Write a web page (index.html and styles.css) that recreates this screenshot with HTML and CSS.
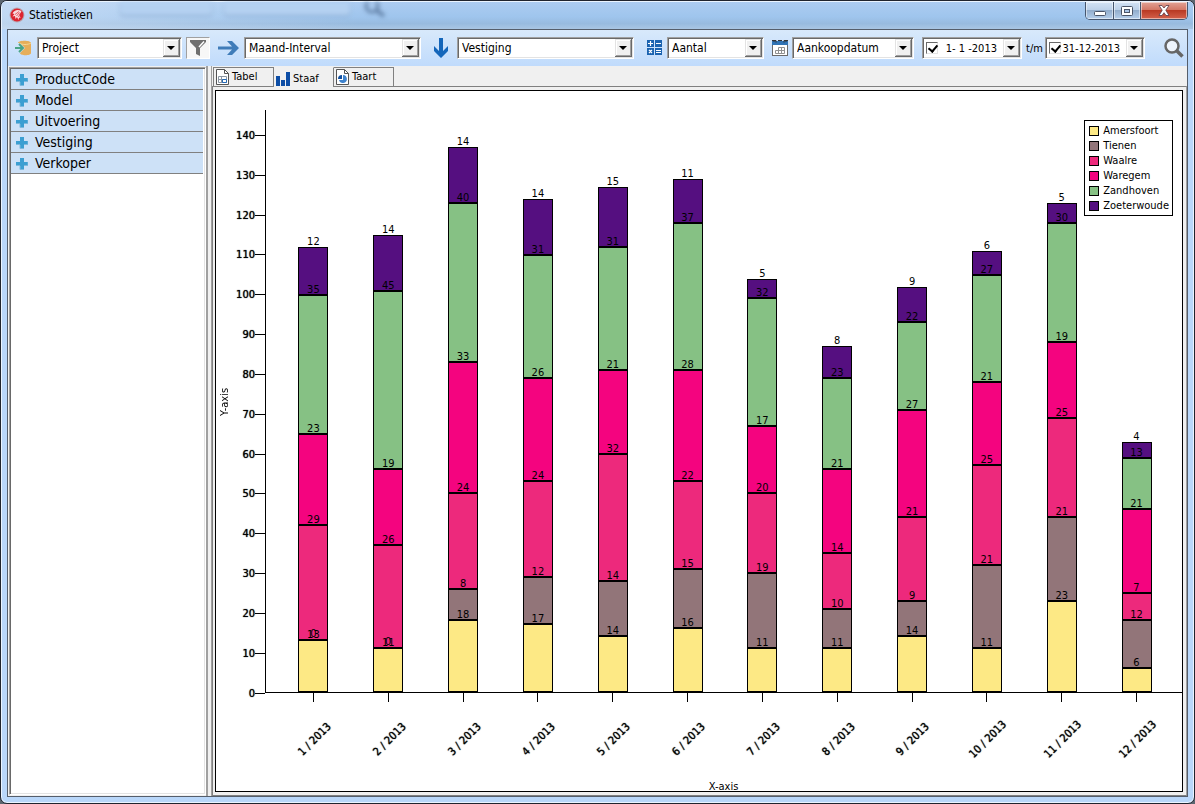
FILE: index.html
```html
<!DOCTYPE html>
<html lang="nl">
<head>
    <meta charset="UTF-8">
    <meta name="viewport" content="width=device-width, initial-scale=1.0">
    <title>Statistieken</title>
    <link rel="stylesheet" href="styles.css">
</head>
<body>
    <div class="window">
        <div class="titlebar">
            <div class="glass">
                <span class="ghost ghost-tab"></span>
                <span class="ghost ghost-tab wide"></span>
                <svg class="ghost-search" width="28" height="20" viewBox="0 0 28 20"><circle cx="10" cy="4" r="6" fill="none" stroke="#6483a9" stroke-width="3"/><path d="M14 8l8 6" stroke="#6483a9" stroke-width="4"/></svg>
            </div>
            <svg width="16" height="16" viewBox="0 0 16 16">
                <circle cx="8" cy="8" r="7.500" fill="#b9a9b4"/>
                <circle cx="8" cy="8" r="6.500" fill="#dc2430"/>
                <path d="M12.500 4C9 2 5 3 3.500 6.500l2 .5-2 2.500 2.500-.5.500 3 1.500-2 1.500 3 .5-2.500 1.500.5-1-3z" fill="#f9d9dc"/>
                <path d="M6 7.500l4-3M7.500 9l3-3.500M9.500 10l2-4" stroke="#dc2430" stroke-width=".7"/>
            </svg>
            <h1>Statistieken</h1>
            <div class="window-buttons">
                <button type="button" class="minimize" aria-label="Minimaliseren"><svg width="12" height="12" viewBox="0 0 12 12"><rect x=".5" y="6.500" width="11" height="4" rx="1" fill="#fff" stroke="#4b5467"/></svg></button>
                <button type="button" class="maximize" aria-label="Maximaliseren"><svg width="12" height="10" viewBox="0 0 12 10"><rect x=".5" y=".5" width="11" height="9" rx="1" fill="#fff" stroke="#4b5467"/><rect x="3.500" y="3.500" width="5" height="3" fill="#a9c4e6" stroke="#4b5467"/></svg></button>
                <button type="button" class="close" aria-label="Sluiten"><svg width="12" height="11" viewBox="0 0 12 11"><path d="M1 .5h3l2 2.500 2-2.500h3L7.800 5.200 11 10.500H8L6 7.700 4 10.500H1l3.200-5.300z" fill="#fff" stroke="#5a3a48" stroke-width=".8"/></svg></button>
            </div>
        </div>

        <div class="client">
            <div class="toolbar">
                <div class="group">
                    <svg width="18" height="18" viewBox="0 0 18 18">
                        <path d="M3 4c0-3 13-3 13 0v10c0 3-11 3-11 0l5-5-5-5z" fill="#e6ae5a"/>
                        <path d="M4 4c3 2 9 2 12 0" fill="none" stroke="#f7d795"/>
                        <path d="M0 9h7M4 5l4 4-4 4" fill="none" stroke="#4aa586" stroke-width="2"/>
                    </svg>
                    <div class="combo combo-project">
                        <select aria-label="Project"><option>Project</option></select>
                        <span class="drop"></span>
                    </div>
                    <button type="button" class="filter" aria-label="Filter"><svg width="16" height="16" viewBox="0 0 16 16"><path d="M0 0h16v2l-6 6v8l-4-2V8L0 2z" fill="#6f6f6f"/><path d="M14 1.500L9 7" fill="none" stroke="#fff" stroke-width="1.500"/></svg></button>
                </div>
                <div class="group">
                    <svg width="22" height="16" viewBox="0 0 22 16"><path d="M0 6.500h14L9 1h5l7 7-7 7H9l5-5.500H0z" fill="#3f7cb9"/></svg>
                    <div class="combo combo-wide">
                        <select aria-label="Rijen"><option>Maand-Interval</option></select>
                        <span class="drop"></span>
                    </div>
                </div>
                <div class="group">
                    <svg width="24" height="20" viewBox="0 0 24 20"><path d="M10 0h4v13l5-5v5l-7 7-7-7V8l5 5z" fill="#1466ba"/></svg>
                    <div class="combo combo-wide">
                        <select aria-label="Kolommen"><option>Vestiging</option></select>
                        <span class="drop"></span>
                    </div>
                </div>
                <div class="group">
                    <svg width="21" height="16" viewBox="0 0 21 16">
                        <path d="M5 0h7v7H5zM13 0h7v7h-7zM5 8h7v7H5zM13 8h7v7h-7z" fill="#1b63b0"/>
                        <path d="M6 3.500h5M8.500 1v5M14 3.500h5M14 10.500h5M14 12.500h5M7 10l3 3M10 10l-3 3" stroke="#fff" stroke-width="1.200"/>
                    </svg>
                    <div class="combo combo-measure">
                        <select aria-label="Waarde"><option>Aantal</option></select>
                        <span class="drop"></span>
                    </div>
                </div>
                <div class="group">
                    <svg width="16" height="16" viewBox="0 0 16 16">
                        <rect x=".5" y="1.500" width="15" height="14" fill="#fff" stroke="#6b6b6b"/>
                        <path d="M0 1h16v4H0z" fill="#2f73b5"/>
                        <path d="M0 .5h4v2M6 .5h4M12 2.500v-2h4M2 0v2M14 0v2" fill="none" stroke="#333"/>
                        <path d="M3.500 10.500v3h9v-6h-6v6M3.500 10.500h9M9.500 7.500v6" fill="none" stroke="#909090"/>
                    </svg>
                    <div class="combo combo-date-field">
                        <select aria-label="Datumveld"><option>Aankoopdatum</option></select>
                        <span class="drop"></span>
                    </div>
                </div>
                <div class="group">
                    <div class="combo combo-date">
                        <input type="checkbox" aria-label="Begindatum actief" checked>
                        <input type="text" aria-label="Begindatum" value="1- 1 -2013">
                        <button type="button" class="drop" aria-label="Kies begindatum"></button>
                    </div>
                    <span class="until">t/m</span>
                    <div class="combo combo-date">
                        <input type="checkbox" aria-label="Einddatum actief" checked>
                        <input type="text" aria-label="Einddatum" value="31-12-2013">
                        <button type="button" class="drop" aria-label="Kies einddatum"></button>
                    </div>
                </div>
                <button type="button" class="search" aria-label="Zoeken"><svg width="20" height="20" viewBox="0 0 20 20"><circle cx="8" cy="8" r="6.500" fill="#eef4fc" stroke="#666" stroke-width="2.500"/><path d="M12.500 12.500l6 6" stroke="#666" stroke-width="3.500"/></svg></button>
            </div>

            <div class="main">
                <div class="sidebar" id="sidebar"></div>
                <div class="splitter"></div>
                <div class="content">
                    <div class="tabs" role="tablist">
                        <button type="button" role="tab" class="tab">
                            <svg width="13" height="16" viewBox="0 0 13 16"><path d="M.5.5h8l4 4v11H.5z" fill="#fff" stroke="#555"/><path d="M8.500.5v4h4" fill="none" stroke="#555"/><path d="M2.500 7.500h8v6h-8zM2.500 10.500h8M5.500 7.500v6" fill="none" stroke="#8b96a3"/><path d="M6.500 10.500h4v3h-4z" fill="#fff" stroke="#2569b5"/></svg>
                            Tabel
                        </button>
                        <button type="button" role="tab" class="tab active" aria-selected="true">
                            <svg width="14" height="14" viewBox="0 0 14 14"><path d="M0 4h4v10H0zM5 8h4v6H5zM10 0h4v14h-4z" fill="#0d4da5"/></svg>
                            Staaf
                        </button>
                        <button type="button" role="tab" class="tab">
                            <svg width="13" height="16" viewBox="0 0 13 16"><path d="M.5.5h8l4 4v11H.5z" fill="#fff" stroke="#555"/><path d="M8.500.5v4h4" fill="none" stroke="#555"/><path d="M7 6a4 4 0 1 1-4 5h4z" fill="#3f83cd"/><path d="M6 6v4H2a4 4 0 0 1 4-4z" fill="#124f9f"/></svg>
                            Taart
                        </button>
                    </div>
                    <div class="tab-page">
                        <div class="chart">
                            <div class="y-title">Y-axis</div>
                            <div class="y-axis" id="yAxis"></div>
                            <div class="plot" id="plot"></div>
                            <div class="x-axis" id="xAxis"></div>
                            <div class="x-title">X-axis</div>
                            <ul class="legend" id="legend"></ul>
                        </div>
                    </div>
                </div>
            </div>
        </div>
    </div>

    <script src="script.js"></script>
</body>
</html>
```

FILE: styles.css
```css
* {
    box-sizing: border-box;
}

body {
    margin: 0;
    height: 100vh;
    background: #5c6670;
    font-family: 'DejaVu Sans Condensed', 'DejaVu Sans', sans-serif;
    font-size: 11px;
    color: #000;
}

button,
input,
select {
    font: inherit;
    color: inherit;
    margin: 0;
    padding: 0;
    border: none;
}

svg {
    display: block;
    flex: none;
}

.window {
    display: flex;
    flex-direction: column;
    height: 100%;
    padding: 0 6px 6px;
    border: 1px solid #20242e;
    border-radius: 7px;
    background: #b9d7fa;
    box-shadow: inset 0 0 0 1px #eaf4ff;
    overflow: hidden;
}

/* title bar */
.titlebar {
    position: relative;
    display: flex;
    align-items: center;
    gap: 4px;
    height: 28px;
    flex: none;
    margin: 0 -5px;
    padding: 0 0 2px 7px;
    border-top: 1px solid #eaf4ff;
    background: linear-gradient(90deg, rgba(215, 230, 248, 0.6), rgba(215, 230, 248, 0) 30%),
        linear-gradient(#acccf1, #9fc5ed 55%, #98bbdf 80%, #a9c6e4);
}

.titlebar > svg,
.titlebar h1 {
    position: relative;
}

.titlebar h1 {
    margin: 0;
    font-size: 12px;
    font-weight: normal;
}

.glass {
    position: absolute;
    inset: 0;
    display: flex;
    gap: 12px;
    padding-left: 118px;
    filter: blur(2px);
    overflow: hidden;
}

.ghost-tab {
    width: 92px;
    height: 13px;
    border-radius: 0 0 4px 4px;
    background: #b4d1f1;
    box-shadow: 0 1px 2px #7c9cc2;
}

.ghost-tab.wide {
    width: 126px;
}

.window-buttons {
    position: relative;
    display: flex;
    align-self: flex-start;
    height: 18px;
    margin-left: auto;
    margin-right: 5px;
    border: 1px solid #46566e;
    border-top: none;
    border-radius: 0 0 5px 5px;
    overflow: hidden;
}

.window-buttons button {
    display: flex;
    align-items: center;
    justify-content: center;
    width: 27px;
    border-right: 1px solid #46566e;
    background: linear-gradient(#d3e2f4, #bcd0e8 48%, #92adcc 50%, #b5cfec);
    box-shadow: inset 0 0 0 1px rgba(255, 255, 255, 0.5);
}

.window-buttons .minimize {
    width: 28px;
}

.window-buttons .close {
    width: 46px;
    border-right: none;
    background: linear-gradient(#e2a396, #d27563 48%, #b93a24 50%, #d4614b);
}

.client {
    display: flex;
    flex-direction: column;
    flex: 1;
    min-height: 0;
    border: 1px solid #555e6b;
    background: #f0f0f0;
}

/* toolbar */
.toolbar {
    display: flex;
    align-items: center;
    gap: 8px;
    height: 36px;
    flex: none;
    padding: 0 3px 0 7px;
    background: linear-gradient(#d8e9fb, #c0dbfc);
}

.group {
    display: flex;
    align-items: center;
    gap: 4px;
}

.combo {
    position: relative;
    display: flex;
    align-items: center;
    height: 22px;
    border: 1px solid;
    border-color: #a0a0a0 #fff #fff #a0a0a0;
    background: #fff;
    box-shadow: inset 1px 1px 0 #696969, inset -1px -1px 0 #e3e3e3;
    font-size: 12px;
}

.combo-project {
    width: 145px;
}

.combo-wide {
    width: 177px;
}

.combo-measure {
    width: 97px;
}

.combo-date-field {
    width: 122px;
}

.combo-date {
    width: 100px;
    padding-left: 3px;
    font-size: 11px;
}

.until {
    width: 15px;
    white-space: nowrap;
}

.combo select {
    width: 100%;
    height: 18px;
    padding: 0 18px 0 4px;
    appearance: none;
    background: none;
}

.combo input[type="text"] {
    flex: 1;
    min-width: 0;
    margin-right: 24px;
    background: none;
    text-align: right;
}

.combo input[type="checkbox"] {
    appearance: none;
    width: 12px;
    height: 12px;
    flex: none;
    border: 1px solid;
    border-color: #696969 #e3e3e3 #e3e3e3 #696969;
    background: #fff;
}

.combo input[type="checkbox"]:checked::before {
    content: "";
    display: block;
    width: 4px;
    height: 7px;
    margin: 0 0 0 3px;
    border: solid #000;
    border-width: 0 2px 2px 0;
    transform: rotate(40deg);
}

.drop {
    position: absolute;
    top: 1px;
    right: 1px;
    width: 17px;
    height: 18px;
    background: #f0f0f0;
    box-shadow: inset -1px -1px 0 #696969, inset 1px 1px 0 #e3e3e3, inset -2px -2px 0 #a0a0a0, inset 2px 2px 0 #fff;
    pointer-events: none;
}

button.drop {
    pointer-events: auto;
}

.drop::after {
    content: "";
    position: absolute;
    top: 7px;
    left: 4px;
    border: solid transparent;
    border-width: 4px 4px 0;
    border-top-color: #000;
}

.filter {
    display: flex;
    align-items: center;
    justify-content: center;
    width: 24px;
    height: 22px;
    border: 1px solid;
    border-color: #a0a0a0 #fff #fff #a0a0a0;
    background: #f7f7f7;
}

.search {
    margin-left: auto;
    background: none;
}

/* main area */
.main {
    display: flex;
    flex: 1;
    min-height: 0;
}

.sidebar {
    width: 197px;
    padding-top: 1px;
    border: 1px solid;
    border-color: #a0a0a0 #fff #fff #a0a0a0;
    margin: 1px 0 1px 1px;
    background: #fff;
    box-shadow: inset 1px 1px 0 #696969, inset -1px -1px 0 #e3e3e3;
}

.sidebar button {
    display: flex;
    align-items: center;
    gap: 7px;
    width: 192px;
    height: 21px;
    margin-left: 1px;
    padding-left: 4px;
    border-bottom: 1px solid #808080;
    background: #cde1f7;
    font-size: 14px;
}

.splitter {
    width: 6px;
    border: solid #a0a0a0;
    border-width: 0 1px 0 2px;
    background: #f0f0f0;
}

.content {
    display: flex;
    flex-direction: column;
    flex: 1;
    min-width: 0;
}

.tabs {
    display: flex;
    height: 20px;
    padding: 1px 0 0 1px;
    flex: none;
}

.tab {
    display: flex;
    align-items: center;
    gap: 3px;
    width: 60px;
    height: 19px;
    padding: 0 0 1px 2px;
    border: 1px solid #808080;
    border-width: 1px 1px 0 0;
    background: #f0f0f0;
}

.tab:first-child {
    width: 61px;
    border-left-width: 1px;
}

.tab.active {
    position: relative;
    height: 20px;
    padding: 2px 0 0 2px;
    border-top-color: #f0f0f0;
}

.tab-page {
    display: flex;
    flex: 1;
    min-height: 0;
    padding: 3px 3px 3px 2px;
    border: 1px solid #808080;
    border-right-color: #a0a0a0;
}

/* stacked bar chart */
.chart {
    position: relative;
    display: grid;
    grid-template-columns: 16px 33px 1fr;
    grid-template-rows: 1fr 88px 10px;
    flex: 1;
    min-width: 0;
    padding-top: 19px;
    border: 1px solid #000;
    background: #fff;
}

.y-title {
    display: flex;
    align-items: center;
    justify-content: center;
    writing-mode: vertical-rl;
    transform: rotate(180deg);
}

.y-axis {
    position: relative;
}

.y-axis div {
    position: absolute;
    right: 0;
    display: flex;
    align-items: center;
    height: 14px;
    transform: translateY(50%);
    text-shadow: 0 0 1px #000;
}

.y-axis div::after {
    content: "";
    width: 10px;
    height: 1px;
    background: #000;
}

.plot {
    display: flex;
    padding: 0 8px 0 10px;
    border-left: 1px solid #000;
    border-bottom: 1px solid #000;
}

.bar {
    display: flex;
    flex-direction: column-reverse;
    align-items: center;
    flex: 1;
}

.segment {
    position: relative;
    width: 30px;
    flex: none;
    border: 1px solid #000;
}

.segment.empty {
    border: none;
}

.segment span {
    position: absolute;
    z-index: 1;
    left: 0;
    right: 0;
    bottom: 100%;
    line-height: 12px;
    text-align: center;
}

.x-axis {
    grid-column: 3;
    display: flex;
    padding: 0 8px 0 11px;
}

.x-axis div {
    flex: 1;
    display: flex;
    flex-direction: column;
    align-items: center;
    gap: 32px;
    white-space: nowrap;
}

.x-axis div::before {
    content: "";
    width: 1px;
    height: 9px;
    background: #000;
}

.x-axis span {
    padding-left: 4px;
    line-height: 14px;
    transform: rotate(-45deg);
    text-shadow: 0 0 1px #000;
}

.x-title {
    grid-column: 3;
    line-height: 12px;
    text-align: center;
}

.legend {
    position: absolute;
    top: 29px;
    right: 9px;
    margin: 0;
    padding: 2px 3px 2px 4px;
    border: 1px solid #000;
    background: #fff;
    list-style: none;
}

.legend li {
    display: flex;
    align-items: center;
    gap: 4px;
    height: 15px;
}

.swatch {
    width: 10px;
    height: 10px;
    border: 1px solid #000;
}

.amersfoort {
    background: #fde985;
}

.tienen {
    background: #927579;
}

.waalre {
    background: #ed297c;
}

.waregem {
    background: #f4047f;
}

.zandhoven {
    background: #86c184;
}

.zoeterwoude {
    background: #550f80;
}
```

FILE: script.js
```js
const filters = ['ProductCode', 'Model', 'Uitvoering', 'Vestiging', 'Verkoper'];
const branches = ['Amersfoort', 'Tienen', 'Waalre', 'Waregem', 'Zandhoven', 'Zoeterwoude'];

// one row per month, values in the order of branches
const months = [
    [13, 0, 29, 23, 35, 12],
    [11, 0, 26, 19, 45, 14],
    [18, 8, 24, 33, 40, 14],
    [17, 12, 24, 26, 31, 14],
    [14, 14, 32, 21, 31, 15],
    [16, 15, 22, 28, 37, 11],
    [11, 19, 20, 17, 32, 5],
    [11, 10, 14, 21, 23, 8],
    [14, 9, 21, 27, 22, 9],
    [11, 21, 25, 21, 27, 6],
    [23, 21, 25, 19, 30, 5],
    [6, 12, 7, 21, 13, 4]
];
const axisMax = 146.4;

const percent = value => `${value / axisMax * 100}%`;

document.getElementById('sidebar').innerHTML = filters.map(name => `
    <button type="button">
        <svg width="13" height="13" viewBox="0 0 13 13"><path d="M5 1h4v4h4v4H9v4H5V9H1V5h4z" fill="#3c9fd2"/><path d="M5 9v3.500h4M1 8.500h4M9 8.500h4V5" fill="none" stroke="#7fb9dc"/></svg>
        ${name}
    </button>`).join('');

let ticks = '';
for (let value = 0; value <= 140; value += 10) {
    ticks += `<div style="bottom: ${percent(value)}">${value}</div>`;
}
document.getElementById('yAxis').innerHTML = ticks;

document.getElementById('plot').innerHTML = months.map(values => {
    const segments = values.map((value, i) => {
        const empty = value === 0 ? ' empty' : '';
        return `<div class="segment ${branches[i].toLowerCase()}${empty}" style="height: ${percent(value)}"><span>${value}</span></div>`;
    });
    return `<div class="bar">${segments.join('')}</div>`;
}).join('');

document.getElementById('xAxis').innerHTML = months
    .map((values, i) => `<div><span>${i + 1} / 2013</span></div>`)
    .join('');

document.getElementById('legend').innerHTML = branches
    .map(name => `<li><span class="swatch ${name.toLowerCase()}"></span>${name}</li>`)
    .join('');
```
